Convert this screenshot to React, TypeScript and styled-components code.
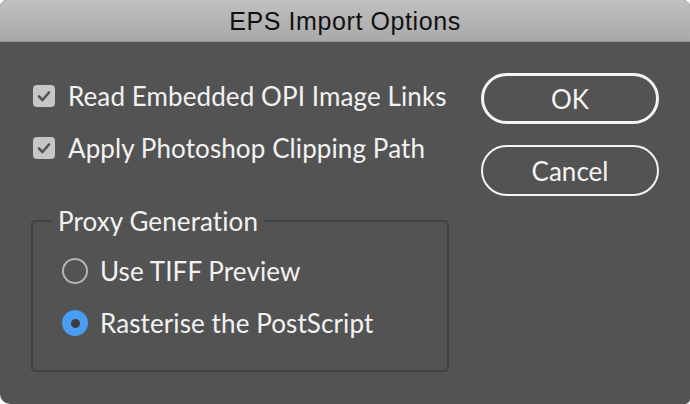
import styled, { createGlobalStyle } from 'styled-components';

const GlobalStyle = createGlobalStyle`
  html, body {
    margin: 0;
    padding: 0;
    background: #ffffff;
  }
`;

const Window = styled.div`
  width: 690px;
  height: 404px;
  display: flex;
  flex-direction: column;
  background: #535353;
  border-radius: 7px 7px 5px 10px;
  overflow: hidden;
  font-family: Lato, 'Open Sans', sans-serif;
`;

const TitleBar = styled.div`
  height: 42px;
  flex: none;
  display: flex;
  align-items: center;
  justify-content: center;
  padding-top: 2px;
  box-sizing: border-box;
  background: linear-gradient(#c0c0c0, #a9a9a9);
  border-bottom: 1px solid #8f8f8f;
  font-family: 'Liberation Sans', Arial, sans-serif;
  font-size: 25px;
  letter-spacing: 0.6px;
  color: #111111;
`;

const Body = styled.div`
  flex: 1;
  display: flex;
  justify-content: space-between;
  padding: 0 31px;
`;

const LeftColumn = styled.div`
  width: 418px;
  padding-top: 38px;
  display: flex;
  flex-direction: column;
`;

const CheckRow = styled.label`
  height: 32px;
  display: flex;
  align-items: center;
  gap: 13px;
  padding-left: 2px;
  margin-bottom: 20px;
  color: #f2f2f2;
  font-size: 26px;
  letter-spacing: 0.1px;
`;

const CheckBox = styled.span`
  width: 22px;
  height: 22px;
  flex: none;
  border-radius: 4px;
  background: #c6c6c6;
  display: flex;
  align-items: center;
  justify-content: center;
`;

const Group = styled.fieldset`
  margin: 22px 0 0 0;
  padding: 0 0 0 29px;
  height: 166px;
  box-sizing: border-box;
  border: 2px solid #434343;
  border-radius: 4px;
`;

const Legend = styled.legend`
  margin-left: -10px;
  padding: 0 6px;
  line-height: 30px;
  font-size: 26px;
  letter-spacing: 0.1px;
  color: #f2f2f2;
`;

const RadioList = styled.div`
  display: flex;
  flex-direction: column;
  gap: 20px;
  padding-top: 19px;
`;

const RadioRow = styled.label`
  height: 32px;
  display: flex;
  align-items: center;
  gap: 12px;
  color: #f2f2f2;
  font-size: 26px;
  letter-spacing: 0.1px;
`;

const Radio = styled.span<{ checked?: boolean }>`
  width: 26px;
  height: 26px;
  flex: none;
  box-sizing: border-box;
  border-radius: 50%;
  border: ${(p) => (p.checked ? 'none' : '2px solid #b4b4b4')};
  background: ${(p) => (p.checked ? '#4a9ef2' : 'transparent')};
  display: flex;
  align-items: center;
  justify-content: center;
  &::after {
    content: '';
    display: ${(p) => (p.checked ? 'block' : 'none')};
    width: 9px;
    height: 9px;
    border-radius: 50%;
    background: #3c3c3c;
  }
`;

const ButtonColumn = styled.div`
  width: 178px;
  padding-top: 31px;
  display: flex;
  flex-direction: column;
  gap: 21px;
`;

const Button = styled.button<{ primary?: boolean }>`
  height: 51px;
  box-sizing: border-box;
  border-radius: 26px;
  border: ${(p) => (p.primary ? '3px' : '2px')} solid #f4f4f4;
  background: transparent;
  color: #f4f4f4;
  font-family: Lato, 'Open Sans', sans-serif;
  font-size: 26px;
  padding: 0;
`;

const Check = () => (
  <svg width="14" height="12" viewBox="0 0 14 12">
    <path d="M2 6.5 L5.5 10 L12 2.5" fill="none" stroke="#555" strokeWidth="2.6" strokeLinecap="round" strokeLinejoin="round" />
  </svg>
);

export default function App() {
  return (
    <>
      <GlobalStyle />
      <Window>
        <TitleBar>EPS Import Options</TitleBar>
        <Body>
          <LeftColumn>
            <CheckRow>
              <CheckBox><Check /></CheckBox>
              Read Embedded OPI Image Links
            </CheckRow>
            <CheckRow>
              <CheckBox><Check /></CheckBox>
              Apply Photoshop Clipping Path
            </CheckRow>
            <Group>
              <Legend>Proxy Generation</Legend>
              <RadioList>
                <RadioRow>
                  <Radio />
                  Use TIFF Preview
                </RadioRow>
                <RadioRow>
                  <Radio checked />
                  Rasterise the PostScript
                </RadioRow>
              </RadioList>
            </Group>
          </LeftColumn>
          <ButtonColumn>
            <Button primary>OK</Button>
            <Button>Cancel</Button>
          </ButtonColumn>
        </Body>
      </Window>
    </>
  );
}
